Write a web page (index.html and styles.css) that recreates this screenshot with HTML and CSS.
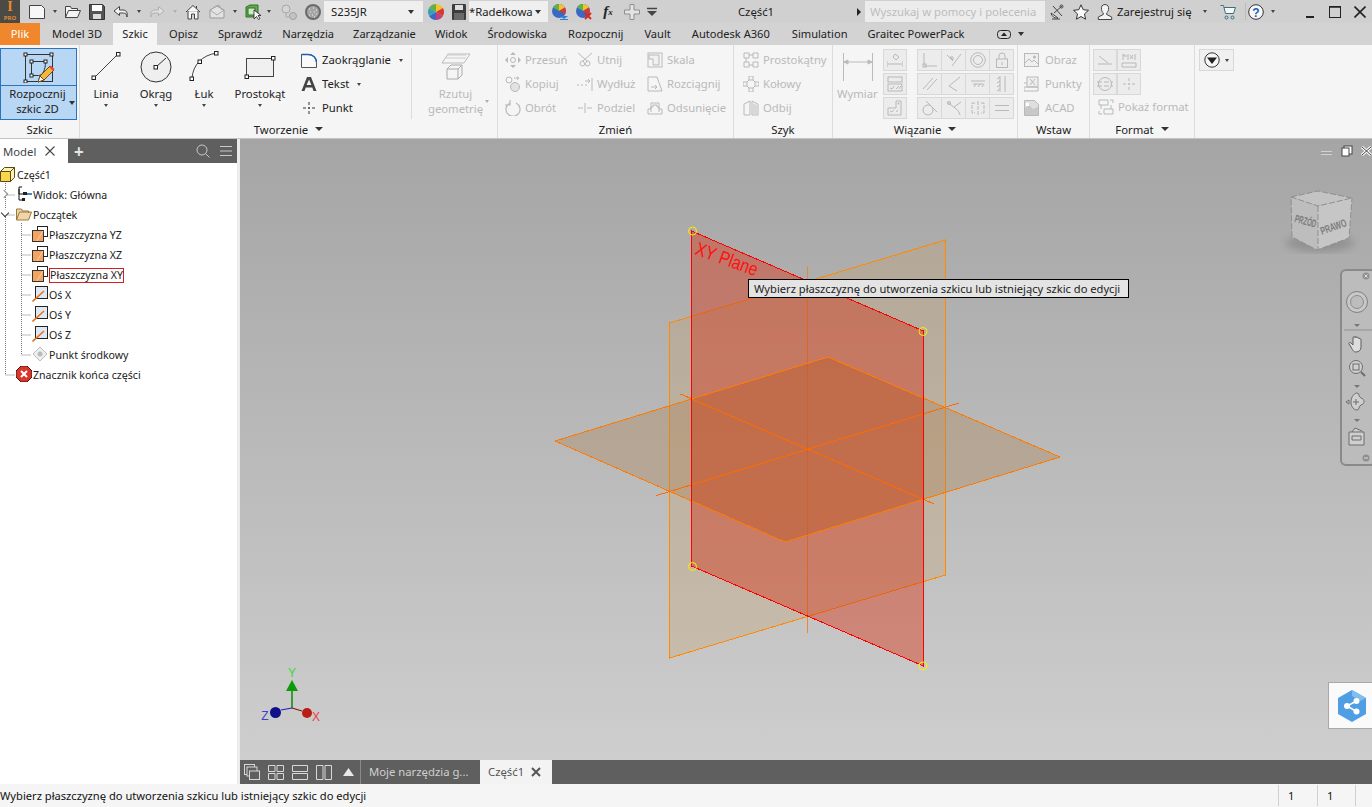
FILE: index.html
```html
<!DOCTYPE html>
<html lang="pl">
<head>
<meta charset="utf-8">
<title>Część1</title>
<link rel="stylesheet" href="styles.css">
</head>
<body>
<svg class="sprite" width="0" height="0">
  <defs>
    <symbol id="plane" viewBox="0 0 16 16"><rect x="5.500" y="0.500" width="10" height="10" fill="#fff" stroke="#222"/><rect x="0.500" y="4.500" width="11" height="11" fill="#f4a460" stroke="#333"/><path d="M5 15 11 5" stroke="#fbd0a0"/></symbol>
    <symbol id="axis" viewBox="0 0 16 16"><rect x="3.500" y="0.500" width="12" height="12" fill="#dfe9f6" stroke="#222"/><path d="M0.500 15.500 12 5" stroke="#e8731a" stroke-width="1.600"/></symbol>
    <symbol id="move" viewBox="0 0 16 16"><g fill="none" stroke="currentColor"><circle cx="8" cy="8" r="2.500"/></g><path d="M8 0l3 3H5zM8 16l3-3H5zM0 8l3-3v6zM16 8l-3-3v6z" fill="currentColor"/></symbol>
  </defs>
</svg>

<div class="app">
  <header class="titlebar">
    <div class="logo"><span class="logo-i">I</span><span class="logo-pro">PRO</span></div>
    <div class="tb-cell w24"><svg class="i16" viewBox="0 0 16 16"><path d="M.5 1.500h12l3 3v10H.5z" fill="#f7f7f7" stroke="#444"/></svg></div>
    <div class="tb-cell w12"><i class="caret"></i></div>
    <div class="tb-cell w24"><svg class="i16" viewBox="0 0 16 16"><path d="M.5 13.500v-11h5l1 2h6v2M.5 13.500l3-7h12l-3 7z" fill="#f4f4f4" stroke="#444"/></svg></div>
    <div class="tb-cell w24"><svg class="i16" viewBox="0 0 16 16"><path d="M.5.500h13l2 2v13H.5z" fill="#555" stroke="#333"/><rect x="3" y="1" width="10" height="6" fill="#fff"/><rect x="4" y="10" width="8" height="5" fill="#ddd"/></svg></div>
    <div class="tb-cell w24"><svg class="i16" viewBox="0 0 16 16"><path d="M6.500 2.500 1 7l5.500 4.500V9h4c2 0 3 1 3.500 4 1-4-.5-7-4-7h-3.500z" fill="#f4f4f4" stroke="#444" stroke-linejoin="round"/></svg></div>
    <div class="tb-cell w12"><i class="caret"></i></div>
    <div class="tb-cell w24"><svg class="i16" viewBox="0 0 16 16"><path d="M9.500 2.500 15 7l-5.500 4.500V9h-4c-2 0-3 1-3.500 4-1-4 .5-7 4-7h3.500z" fill="#e0e0e0" stroke="#b0b0b0" stroke-linejoin="round"/></svg></div>
    <div class="tb-cell w12"><i class="caret caret-off"></i></div>
    <div class="tb-cell w24"><svg class="i16" viewBox="0 0 16 16"><path d="M1 8 8 1.500 15 8M3 7v8h3.500v-5h3v5H13V7M11.500 2v2.500" fill="#f7f7f7" stroke="#444"/></svg></div>
    <div class="tb-cell w24"><svg class="i16" viewBox="0 0 16 16"><path d="M1 6l7-4 7 4v8H1z" fill="#e2e2e2" stroke="#999"/><path d="M1 6l7 5 7-5M5 3l5-2 3 5" fill="none" stroke="#aaa"/></svg></div>
    <div class="tb-cell w12"><i class="caret"></i></div>
    <div class="tb-cell w24"><svg class="i16" viewBox="0 0 16 16"><path d="M1 3l4-2h8v10l-2 2H1z" fill="#5fae4b" stroke="#2e6f2a"/><rect x="3" y="4" width="7" height="7" fill="#cfe9c6" stroke="#2e6f2a"/><path d="M9 6v9l2.500-2.500 2 3 1.500-1-2-3h3z" fill="#fff" stroke="#222" stroke-width=".8"/></svg></div>
    <div class="tb-cell w8"><i class="caret"></i></div>
    <div class="tb-cell w32"><svg class="i16" viewBox="0 0 16 16"><circle cx="5" cy="5" r="4" fill="#d4d4d4" stroke="#a8a8a8"/><ellipse cx="12" cy="12" rx="3.500" ry="3.500" fill="#c4c4c4" stroke="#a0a0a0"/><path d="M5 9v4h3" fill="none" stroke="#aaa"/></svg></div>
    <div class="tb-cell w16"><svg class="i16" viewBox="0 0 16 16"><circle cx="8" cy="8" r="8" fill="#6a6a6a"/><circle cx="8" cy="8" r="6" fill="#a5a5a5"/><path d="M4 5h1M8 4h1M11 6h1M5 8h1M9 8h1M4 11h1M7 11h1M11 10h1M9 13h1" stroke="#eee"/></svg></div>
    <div class="combo combo-mat">S235JR<i class="caret caret-dark"></i></div>
    <div class="tb-cell w26"><svg class="i16" viewBox="0 0 16 16"><path d="M8 8V0a8 8 0 0 1 6.900 4z" fill="#f2c32c"/><path d="M8 8l6.900-4a8 8 0 0 1 0 8z" fill="#d9382c"/><path d="M8 8l6.900 4A8 8 0 0 1 8 16z" fill="#c23f7d"/><path d="M8 8v8a8 8 0 0 1-6.900-4z" fill="#3a68c6"/><path d="M8 8l-6.900 4a8 8 0 0 1 0-8z" fill="#35a0b8"/><path d="M8 8 1.100 4A8 8 0 0 1 8 0z" fill="#63b043"/></svg></div>
    <div class="tb-cell w20"><svg class="i16" viewBox="0 0 16 16"><rect x="1" y="0" width="14" height="16" rx="1" fill="#3d3d3d"/><rect x="4" y="1" width="8" height="5" fill="#ddd"/><rect x="3" y="9" width="10" height="7" fill="#6a6a6a"/></svg></div>
    <div class="combo combo-app"><span class="combo-name">*Radełkowa</span><i class="caret caret-dark"></i></div>
    <div class="tb-cell w24"><svg class="i16" viewBox="0 0 16 16"><circle cx="7" cy="7" r="7" fill="#3a68c6"/><path d="M7 7V0a7 7 0 0 1 6 3.500z" fill="#f2c32c"/><path d="M7 7l6-3.500A7 7 0 0 1 13 10z" fill="#d9382c"/><path d="M7 7 1 3.500A7 7 0 0 1 7 0z" fill="#63b043"/><path d="M8 12h8l-4 3z" fill="#2f7fd6"/><path d="M8 15.500h8" stroke="#2f7fd6"/></svg></div>
    <div class="tb-cell w24"><svg class="i16" viewBox="0 0 16 16"><circle cx="7" cy="7" r="7" fill="#3a68c6"/><path d="M7 7V0a7 7 0 0 1 6 3.500z" fill="#f2c32c"/><path d="M7 7l6-3.500A7 7 0 0 1 13 10z" fill="#d9382c"/><path d="M7 7 1 3.500A7 7 0 0 1 7 0z" fill="#63b043"/><path d="M9 9l6 6M15 9l-6 6" stroke="#d8281c" stroke-width="2"/></svg></div>
    <div class="tb-cell w24 fx">f<sub>x</sub></div>
    <div class="tb-cell w24"><svg class="i16" viewBox="0 0 16 16"><path d="M6 .5h4v5.500h5.500v4H10v5.500H6V10H.5V6H6z" fill="#e4e4e4" stroke="#8f8f8f"/></svg></div>
    <div class="tb-cell w16"><svg class="i10" viewBox="0 0 10 10"><path d="M0 1.500h10" stroke="#444" stroke-width="1.500"/><path d="M0 4h10L5 9z" fill="#444"/></svg></div>
    <div class="doc-title">Część1</div>
    <div class="tb-cell w13"><i class="caret-right"></i></div>
    <div class="search">Wyszukaj w pomocy i polecenia</div>
    <div class="tb-cell w24"><svg class="i16" viewBox="0 0 16 16"><path d="M2 9a6 6 0 0 0 7 5zM4 2l9 10M13 2 5 9" fill="#eee" stroke="#444"/><path d="M3 15h8" stroke="#444"/><circle cx="12.500" cy="2.500" r="1.500" fill="none" stroke="#444"/></svg></div>
    <div class="tb-cell w24"><svg class="i16" viewBox="0 0 16 16"><path d="M8 .8 10.200 5.700l5.300.6-4 3.600 1.100 5.300L8 12.500l-4.600 2.700 1.100-5.300-4-3.600 5.300-.6z" fill="#fafafa" stroke="#333"/></svg></div>
    <div class="tb-cell w24"><svg class="i16" viewBox="0 0 16 16"><path d="M8 .5c-3 0-4 2.500-3.500 5 .3 1.500 1 3 1.800 3.500v1.500l-5 2.500v2.500h13.400V13l-5-2.500V9c.8-.5 1.500-2 1.800-3.500.5-2.500-.5-5-3.500-5z" fill="#f4f4f4" stroke="#444"/></svg></div>
    <div class="tb-text">Zarejestruj się</div>
    <div class="tb-cell w30"><i class="caret"></i></div>
    <div class="tb-cell w16"><svg class="i16" viewBox="0 0 16 16"><path d="M.5 1.500h3l2 8h8l2-6H4.200" fill="#f7f7f7" stroke="#3a6f80"/><circle cx="6.500" cy="13.500" r="1.500" fill="none" stroke="#3a6f80"/><circle cx="12.500" cy="13.500" r="1.500" fill="none" stroke="#3a6f80"/></svg></div>
    <div class="tb-sep"></div>
    <div class="tb-cell w18"><svg class="i16" viewBox="0 0 16 16"><circle cx="8" cy="8" r="7.300" fill="#f7f7f7" stroke="#333"/><text x="8" y="12.500" class="help-q">?</text></svg></div>
    <div class="tb-cell w16"><i class="caret"></i></div>
    <div class="win-ctl">
      <svg class="i12" viewBox="0 0 12 12"><path d="M2 11h8" stroke="#222" stroke-width="2"/></svg>
      <svg class="i12" viewBox="0 0 12 12"><rect x=".5" y=".5" width="11" height="11" fill="none" stroke="#222"/><path d="M0 1h12" stroke="#222" stroke-width="1.500"/></svg>
      <svg class="i12" viewBox="0 0 12 12"><path d="M.5.500l11 11M11.500.500l-11 11" stroke="#222" stroke-width="1.600"/></svg>
    </div>
  </header>

  <nav class="tabs">
    <div class="tab tab-file">Plik</div>
    <div class="tab tab-model">Model 3D</div>
    <div class="tab tab-on">Szkic</div>
    <div class="tab">Opisz</div>
    <div class="tab">Sprawdź</div>
    <div class="tab">Narzędzia</div>
    <div class="tab mln1">Zarządzanie</div>
    <div class="tab mln1">Widok</div>
    <div class="tab">Środowiska</div>
    <div class="tab ml1">Rozpocznij</div>
    <div class="tab ml1">Vault</div>
    <div class="tab ml1">Autodesk A360</div>
    <div class="tab ml2">Simulation</div>
    <div class="tab">Graitec PowerPack</div>
    <div class="tab-min"><svg class="min-ic" viewBox="0 0 14 9"><rect x=".5" y=".5" width="13" height="8" rx="3" fill="none" stroke="#222"/><path d="M7 2.500 10 6H4z" fill="#222"/></svg><i class="caret caret-dark"></i></div>
  </nav>

  <section class="ribbon">
    <div class="rgroup g-szkic">
      <div class="startsketch">
        <div class="ss-top">
          <svg class="i32" viewBox="0 0 32 32"><rect x="2.500" y="3.500" width="27" height="27" fill="none" stroke="#333"/><path d="M8.500 10.500v14h7c4 0 7-5 7-14z" fill="none" stroke="#333"/><g fill="#fff" stroke="#222"><rect x="1" y="2" width="3" height="3"/><rect x="27" y="2" width="3" height="3"/><rect x="1" y="29" width="3" height="3"/><rect x="7" y="9" width="3" height="3"/><rect x="21" y="9" width="3" height="3"/><rect x="7" y="23" width="3" height="3"/></g><path d="M15 31l2-6L27 15l4 4-10 10z" fill="#f6b63c" stroke="#6a4a10"/><path d="M15 31l2-6 4 4z" fill="#fff" stroke="#6a4a10"/><path d="M26 16l4 4 1.500-2-3.500-3.500z" fill="#e04a3a"/></svg>
        </div>
        <div class="ss-bot"><span>Rozpocznij<br>szkic 2D</span><i class="caret caret-dark ss-caret"></i></div>
      </div>
      <div class="rlabel">Szkic</div>
    </div>

    <div class="rgroup g-tworz">
      <div class="rbody">
        <div class="lbtn w48">
          <svg class="i30" viewBox="0 0 30 30"><path d="M3 27 27 3" stroke="#444"/><rect x="1" y="25" width="3.500" height="3.500" fill="#fff" stroke="#222"/><rect x="25.500" y="1.500" width="3.500" height="3.500" fill="#fff" stroke="#222"/></svg>
          <span>Linia</span><i class="caret"></i>
        </div>
        <div class="lbtn w52">
          <svg class="i32" viewBox="0 0 32 32"><circle cx="16" cy="16" r="15" fill="#efefef" stroke="#333"/><path d="M16 16 26 7" stroke="#333"/><rect x="14" y="14.500" width="3.500" height="3.500" fill="#fff" stroke="#222"/></svg>
          <span>Okrąg</span><i class="caret"></i>
        </div>
        <div class="lbtn w44">
          <svg class="i30" viewBox="0 0 30 30"><path d="M3 27C4 14 13 4 28 2" fill="none" stroke="#444"/><rect x="1" y="26" width="3.500" height="3.500" fill="#fff" stroke="#222"/><rect x="9" y="9" width="3.500" height="3.500" fill="#fff" stroke="#222"/><rect x="25.500" y="0.500" width="3.500" height="3.500" fill="#fff" stroke="#222"/></svg>
          <span>Łuk</span><i class="caret"></i>
        </div>
        <div class="lbtn w68">
          <svg class="i32w" viewBox="0 0 32 24"><rect x="2.500" y="3.500" width="27" height="18" fill="#f0f0f0" stroke="#444"/><rect x="1" y="20" width="3.500" height="3.500" fill="#fff" stroke="#222"/><rect x="27.500" y="1.500" width="3.500" height="3.500" fill="#fff" stroke="#222"/></svg>
          <span>Prostokąt</span><i class="caret"></i>
        </div>
        <div class="scol">
          <div class="srow gap5"><svg class="i16" viewBox="0 0 16 16"><path d="M.5 2.500h7a8 8 0 0 1 8 8v5H.5z" fill="#fafafa" stroke="#555"/><path d="M.5 2.500h7a8 8 0 0 1 8 8" fill="none" stroke="#1d5fb5" stroke-width="1.500"/></svg><span>Zaokrąglanie</span><i class="caret cm8"></i></div>
          <div class="srow gap5"><svg class="i16" viewBox="0 0 16 16"><path d="M0.500 15 6 1h4l5.500 14h-3l-1.200-3.500H4.700L3.500 15zM5.600 9h4.800L8 3.500z" fill="#444"/></svg><span>Tekst</span><i class="caret cm8"></i></div>
          <div class="srow gap5"><svg class="i16" viewBox="0 0 16 16"><path d="M8 2v3M8 7v2M8 11v3M2 8h3M7 8h2M11 8h3" stroke="#333"/></svg><span>Punkt</span></div>
        </div>
        <div class="lbtn off rzutuj">
          <svg class="i30" viewBox="0 0 30 30"><path d="M6 2h22l-6 9H0z" fill="none" stroke="#bbb" transform="translate(1 1)"/><path d="M4 7h21M7 4h18" stroke="#ccc"/><path d="M6 18h11v10H6zM6 18l4-4h11v10l-4 4M17 18l4-4" fill="none" stroke="#aaa"/></svg>
          <span class="two">Rzutuj<br>geometrię</span><i class="caret caret-off rz-caret"></i>
        </div>
      </div>
      <div class="rlabel">Tworzenie<i class="caret caret-big"></i></div>
    </div>

    <div class="rgroup g-zmien off">
      <div class="rbody zmien-grid">
        <div class="srow"><svg class="i16"><use href="#move"/></svg><span>Przesuń</span></div>
        <div class="srow"><svg class="i16" viewBox="0 0 16 16"><path d="M1 1l9 8M15 1 6 9M6 9a2.500 2.500 0 1 0 2 3zM10 9a2.500 2.500 0 1 1-2 3z" fill="none" stroke="currentColor"/></svg><span>Utnij</span></div>
        <div class="srow"><svg class="i16" viewBox="0 0 16 16"><path d="M2 3h10v10H6V7H2z" fill="#f0f0f0" stroke="currentColor"/><rect x="1" y="1" width="14" height="14" fill="none" stroke="currentColor"/></svg><span>Skala</span></div>
        <div class="srow"><svg class="i16" viewBox="0 0 16 16"><circle cx="4" cy="4" r="3" fill="none" stroke="currentColor"/><circle cx="10" cy="11" r="4.500" fill="#e2e2e2" stroke="currentColor"/><path d="M9 2h5M12 1l2 1-2 2" fill="none" stroke="currentColor"/></svg><span>Kopiuj</span></div>
        <div class="srow"><svg class="i16" viewBox="0 0 16 16"><path d="M0 9h2M4 9h2M8 9h2M15 2v13M8 5h5M11 3l2 2-2 2" fill="none" stroke="currentColor"/></svg><span>Wydłuż</span></div>
        <div class="srow"><svg class="i16" viewBox="0 0 16 16"><path d="M1 1h9l5 14H1zM4 11h6M8 9l2 2-2 2" fill="none" stroke="currentColor"/></svg><span>Rozciągnij</span></div>
        <div class="srow"><svg class="i16" viewBox="0 0 16 16"><path d="M5 3a7 7 0 1 0 6 0M5 0v5H0" fill="none" stroke="currentColor" stroke-width="1.200"/></svg><span>Obrót</span></div>
        <div class="srow"><svg class="i16" viewBox="0 0 16 16"><path d="M1 8h5M10 8h5M8 3v10" stroke="currentColor"/></svg><span>Podziel</span></div>
        <div class="srow"><svg class="i16" viewBox="0 0 16 16"><path d="M1 14V9h3V3h8v6h3v5zM4 12V7h2V5h4v2h2v5" fill="none" stroke="currentColor"/></svg><span>Odsunięcie</span></div>
      </div>
      <div class="rlabel">Zmień</div>
    </div>

    <div class="rgroup g-szyk off">
      <div class="rbody scol">
        <div class="srow"><svg class="i16" viewBox="0 0 16 16"><path d="M1 1h5v5H1zM10 1h5v5h-5zM1 10h5v5H1zM10 10h5v5h-5zM6 3h4M3 6v4M6 13h4" fill="none" stroke="currentColor"/></svg><span>Prostokątny</span></div>
        <div class="srow"><svg class="i16" viewBox="0 0 16 16"><path d="M6 0h4v4H6zM0 6h4v4H0zM12 6h4v4h-4zM6 12h4v4H6zM4 6l2-2M10 4l2 2M4 10l2 2M12 10l-2 2" fill="none" stroke="currentColor"/></svg><span>Kołowy</span></div>
        <div class="srow"><svg class="i16" viewBox="0 0 16 16"><path d="M7 1 1 4v11h6zM9 1l6 3v11H9z" fill="none" stroke="currentColor"/><path d="M10 3l4 2v9h-4z" fill="#d8d8d8"/></svg><span>Odbij</span></div>
      </div>
      <div class="rlabel">Szyk</div>
    </div>

    <div class="rgroup g-wiaz off">
      <div class="rbody wiaz-body">
        <div class="wymiar">
          <svg class="wym-ic" viewBox="0 0 32 30"><path d="M1.500 0v28M30.500 0v28M2 9h28M2 9l4-2v4zM30 9l-4-2v4z" fill="#bbb" stroke="#bbb"/></svg>
          <span>Wymiar</span>
        </div>
        <div class="wcol">
          <div class="tbox"><svg class="i16" viewBox="0 0 16 16"><path d="M0 9v6M16 9v6M1 12h14M8 2l4 3-3 3-3-3z" fill="none" stroke="currentColor"/></svg></div>
          <div class="tbox"><svg class="i16" viewBox="0 0 16 16"><rect x="1" y="1" width="14" height="5" fill="none" stroke="currentColor"/><rect x="1" y="8" width="14" height="7" fill="none" stroke="currentColor"/><path d="M3 12l2 1 2-3M9 13l3-3M12 13l2-3" fill="none" stroke="currentColor"/></svg></div>
          <div class="tbox"><svg class="i16" viewBox="0 0 16 16"><path d="M1 8h8V1h5v14H1z" fill="none" stroke="currentColor"/><path d="M3 11l2 1 2-2M9 12l2-2" stroke="currentColor" fill="none"/><circle cx="11.500" cy="3.500" r="1" fill="currentColor"/></svg></div>
        </div>
        <div class="wgrid">
          <div class="gcell"><svg class="i16" viewBox="0 0 16 16"><path d="M2 1v12M2 14h13" fill="none" stroke="currentColor"/><rect x="1" y="12" width="3" height="3" fill="none" stroke="currentColor"/></svg></div>
          <div class="gcell"><svg class="i16" viewBox="0 0 16 16"><path d="M1 3l6 6M15 2 6 14M4 5l3 3V5z" fill="none" stroke="currentColor"/></svg></div>
          <div class="gcell"><svg class="i16" viewBox="0 0 16 16"><circle cx="8" cy="8" r="7.300" fill="none" stroke="currentColor"/><circle cx="8" cy="8" r="4.500" fill="none" stroke="currentColor"/></svg></div>
          <div class="gcell"><svg class="i16" viewBox="0 0 16 16"><rect x="2.500" y="7" width="11" height="8.500" fill="none" stroke="currentColor"/><path d="M5 7V4a3 3 0 0 1 6 0v3M8 10v3" fill="none" stroke="currentColor"/></svg></div>
          <div class="gcell"><svg class="i16" viewBox="0 0 16 16"><path d="M1 13 11 2M5 14 15 3" stroke="currentColor"/></svg></div>
          <div class="gcell"><svg class="i16" viewBox="0 0 16 16"><path d="M14 1 3 10l8 5" fill="none" stroke="currentColor"/></svg></div>
          <div class="gcell"><svg class="i16" viewBox="0 0 16 16"><path d="M1 5h14M3 8h10M4 11l2-3M8 11l2-3M12 11l2-3" fill="none" stroke="currentColor"/></svg></div>
          <div class="gcell"><svg class="i16" viewBox="0 0 16 16"><path d="M6 0v16M11 0v16M3 3l3-2M3 7l3-2M3 11l3-2M3 15l3-2" fill="none" stroke="currentColor"/></svg></div>
          <div class="gcell"><svg class="i16" viewBox="0 0 16 16"><circle cx="6" cy="10" r="5" fill="none" stroke="currentColor"/><path d="M4 1l11 11" stroke="currentColor"/></svg></div>
          <div class="gcell"><svg class="i16" viewBox="0 0 16 16"><path d="M1 2l8 6c3 2 4 4 5 7M15 2 8 7" fill="none" stroke="currentColor"/><circle cx="3" cy="3" r="1.500" fill="none" stroke="currentColor"/></svg></div>
          <div class="gcell"><svg class="i16" viewBox="0 0 16 16"><path d="M8 1v14M5 3H2v10h3M11 3h3v10h-3" fill="none" stroke="currentColor" stroke-dasharray="4 1"/></svg></div>
          <div class="gcell"><svg class="i16" viewBox="0 0 16 16"><path d="M1 5.500h14M1 10.500h14" stroke="currentColor"/></svg></div>
        </div>
      </div>
      <div class="rlabel">Wiązanie<i class="caret caret-big"></i></div>
    </div>

    <div class="rgroup g-wstaw off">
      <div class="rbody scol">
        <div class="srow gap5"><svg class="i16" viewBox="0 0 16 16"><rect x=".5" y="1.500" width="14" height="13" fill="#efefef" stroke="currentColor"/><path d="M1 11l4-4 3 3 2-2 4 4" fill="none" stroke="currentColor"/><circle cx="10.500" cy="5" r="1.500" fill="currentColor"/></svg><span>Obraz</span></div>
        <div class="srow gap5"><svg class="i16" viewBox="0 0 16 16"><rect x="3" y="1" width="11" height="10" fill="#eee" stroke="currentColor"/><path d="M6 3l5 6M11 3 6 9M0 7h3M0 11h14v4H0z" fill="none" stroke="currentColor"/></svg><span>Punkty</span></div>
        <div class="srow gap5"><svg class="i16" viewBox="0 0 16 16"><path d="M.5.500h10l4 4v11H.5z" fill="#dfdfdf" stroke="currentColor"/><path d="M1 8l4-3 4 4 5-2v8H1z" fill="#c8c8c8"/><rect x="2" y="3" width="3" height="3" fill="#fff"/></svg><span>ACAD</span></div>
      </div>
      <div class="rlabel">Wstaw</div>
    </div>

    <div class="rgroup g-format off">
      <div class="rbody fmt-body">
        <div class="fgrid">
          <div class="fcell"><svg class="i16" viewBox="0 0 16 16"><path d="M2 4l9 7M1 12h14" fill="none" stroke="currentColor"/></svg></div>
          <div class="fcell"><svg class="i16" viewBox="0 0 16 16"><path d="M1 11h14v4H1zM2 2v6M7 2v6M3 2v2h3M9 3l3 4M12 3 9 7M14 2v6" fill="none" stroke="currentColor"/></svg></div>
          <div class="fcell"><svg class="i16" viewBox="0 0 16 16"><circle cx="8" cy="8" r="6.500" fill="none" stroke="currentColor"/><path d="M0 6h16M0 10h16" stroke="currentColor" stroke-dasharray="5 2"/></svg></div>
          <div class="fcell"><svg class="i16" viewBox="0 0 16 16"><path d="M8 2v3M8 7v2M8 11v3M2 8h3M7 8h2M11 8h3" stroke="currentColor"/></svg></div>
        </div>
        <div class="srow fmt-row"><svg class="i16" viewBox="0 0 16 16"><path d="M1 1h9v5H1zM6 10h9v5H6zM3 6v4M13 6v4M12 1h3v3M1 12v3h3" fill="none" stroke="currentColor"/></svg><span>Pokaż format</span></div>
      </div>
      <div class="rlabel">Format<i class="caret caret-big"></i></div>
    </div>

    <div class="g-extra">
      <div class="extra-btn"><svg class="i16" viewBox="0 0 16 16"><circle cx="8" cy="8" r="7.200" fill="#f7f7f7" stroke="#333"/><path d="M3 5.500h10L8 12z" fill="#222"/></svg><i class="caret"></i></div>
    </div>
  </section>

  <main class="workspace">
    <aside class="panel">
      <div class="panel-head">
        <div class="panel-tab">Model<svg class="i10" viewBox="0 0 10 10"><path d="M.5.500l9 9M9.500.500l-9 9" stroke="#444" stroke-width="1.100"/></svg></div>
        <div class="panel-bar">
          <span class="panel-plus">+</span>
          <svg class="i14 push" viewBox="0 0 14 14"><circle cx="6" cy="6" r="5" fill="none" stroke="#c8c8c8"/><path d="M9.500 9.500 13.500 13.500" stroke="#c8c8c8"/></svg>
          <svg class="i14" viewBox="0 0 14 14"><path d="M1 2.500h12M1 7h12M1 11.500h12" stroke="#c8c8c8"/></svg>
        </div>
      </div>
      <div class="tree">
        <svg class="tree-lines" viewBox="0 0 60 220"><path d="M5.500 20V212M5.500 52h10M5.500 32h10M5.500 212h10M21.500 60V192M21.500 72h10M21.500 92h10M21.500 112h10M21.500 132h10M21.500 152h10M21.500 172h10M21.500 192h10" fill="none" stroke="#777" stroke-dasharray="1 1"/></svg>
        <div class="trow"><svg class="i16" viewBox="0 0 16 16"><path d="M.5 5.500h10v10H.5z" fill="#f8d84a" stroke="#5a4a10"/><path d="M.5 5.500l4-4h10l-4 4zM10.500 5.500l4-4v10l-4 4z" fill="#fbf2b8" stroke="#5a4a10"/></svg>Część1</div>
        <div class="trow lv1"><i class="twist closed"></i><svg class="i16" viewBox="0 0 16 16"><path d="M6 1H3v7M3 3v11h3M3 8h4" fill="none" stroke="#111"/><rect x="7" y="6" width="4" height="3" fill="#222"/><rect x="11" y="7" width="5" height="2" fill="#4a84c8"/><rect x="6" y="12" width="3" height="3" fill="#222"/></svg>Widok: Główna</div>
        <div class="trow lv1"><i class="twist open"></i><svg class="i16" viewBox="0 0 16 16"><path d="M.5 14V3h5l1 2h6v2M.5 14l3-8h12l-3 8z" fill="#f0d5a8" stroke="#9b7a3f"/></svg>Początek</div>
        <div class="trow lv2"><svg class="i16"><use href="#plane"/></svg>Płaszczyzna YZ</div>
        <div class="trow lv2"><svg class="i16"><use href="#plane"/></svg>Płaszczyzna XZ</div>
        <div class="trow lv2"><svg class="i16"><use href="#plane"/></svg><span class="picked">Płaszczyzna XY</span></div>
        <div class="trow lv2"><svg class="i16"><use href="#axis"/></svg>Oś X</div>
        <div class="trow lv2"><svg class="i16"><use href="#axis"/></svg>Oś Y</div>
        <div class="trow lv2"><svg class="i16"><use href="#axis"/></svg>Oś Z</div>
        <div class="trow lv2"><svg class="i16" viewBox="0 0 16 16"><path d="M8 1 15 8 8 15 1 8z" fill="#efefef" stroke="#bbb"/><circle cx="8" cy="8" r="2.500" fill="#bbb"/></svg>Punkt środkowy</div>
        <div class="trow lv1"><svg class="i16" viewBox="0 0 16 16"><path d="M5 0h6l5 5v6l-5 5H5l-5-5V5z" fill="#d8382c" stroke="#4a1010"/><path d="M5 5l6 6M11 5l-6 6" stroke="#fff" stroke-width="2"/></svg>Znacznik końca części</div>
      </div>
    </aside>

    <div class="right">
      <div class="viewport">
        <svg class="scene" viewBox="240 139 1132 621">
          <defs><filter id="soft"><feGaussianBlur stdDeviation="4"/></filter></defs>
          <polygon class="crisp" points="669.500,323 945.500,240 945.500,575 669.500,658" fill="rgb(200,160,110)" fill-opacity=".3" stroke="#ff8a00"/>
          <line class="crisp" x1="807.500" y1="266" x2="807.500" y2="633" stroke="#e88a30"/>
          <polygon points="692,231 923,331 923,666 692,566" fill="rgb(213,55,24)" fill-opacity=".45"/>
          <polygon points="555,441 828,357 1060,457 785,542" fill="rgb(175,130,80)" fill-opacity=".35"/>
          <polygon points="692,399 828,357 923,398 923,499 785,542 692,501" fill="rgb(200,80,40)" fill-opacity=".33"/>
          <polygon class="crisp" points="555,441 828,357 1060,457 785,542" fill="none" stroke="#ff7a00"/>
          <line class="crisp" x1="680.500" y1="394" x2="934" y2="504" stroke="#ff6a00"/>
          <line class="crisp" x1="656.500" y1="495.500" x2="959" y2="403" stroke="#ff6a00"/>
          <polygon class="crisp" points="691.500,231 923.500,331 923.500,666 691.500,566" fill="none" stroke="#ff0000"/>
          <g fill="none" stroke="#ffee00"><circle cx="692.500" cy="231" r="4"/><circle cx="923" cy="331.500" r="4"/><circle cx="692.500" cy="566.500" r="4"/><circle cx="923" cy="666" r="4"/></g>
          <text class="xy" transform="translate(694 254) rotate(20)" textLength="65" lengthAdjust="spacingAndGlyphs">XY Plane</text>

          <g class="triad">
            <path d="M292 708V690" stroke="#0a8a0a" stroke-width="1.500"/>
            <path d="M292 680 298 691H286z" fill="#0a9a0a"/>
            <path d="M292 708 281 710" stroke="#2222bb" stroke-width="1.200" fill="none"/>
            <ellipse cx="275.500" cy="712.500" rx="5.500" ry="5.500" fill="#10108a"/>
            <path d="M292 708 302 711" stroke="#7a1a10" stroke-width="1.200"/>
            <circle cx="307" cy="713" r="5" fill="#b81c14"/>
            <text x="292" y="677" class="t-y">Y</text>
            <text x="265" y="720" class="t-z">Z</text>
            <text x="316" y="721" class="t-x">X</text>
          </g>

          <g class="cube">
            <ellipse cx="1320" cy="243" rx="34" ry="9" fill="#7a7a7a" fill-opacity=".55" filter="url(#soft)"/>
            <polygon points="1291,197 1318,191 1352,198 1318,206" fill="#c3c3c3"/>
            <polygon points="1291,197 1318,206 1317,250 1292,237" fill="#bdbdbd"/>
            <polygon points="1318,206 1352,198 1349,238 1317,250" fill="#c6c6c6"/>
            <path d="M1291 197 1318 191 1352 198 1318 206 1291 197 1292 237 1317 250 1349 238 1352 198M1318 206V250" fill="none" stroke="#8f8f8f" stroke-dasharray="6 2"/>
            <text class="cube-t" transform="translate(1294 222) rotate(15)" textLength="22" lengthAdjust="spacingAndGlyphs">PRZÓD</text>
            <text class="cube-t" transform="translate(1322 235) rotate(-20)" textLength="27" lengthAdjust="spacingAndGlyphs">PRAWO</text>
          </g>
        </svg>

        <div class="vp-ctl">
          <svg class="i12" viewBox="0 0 12 12"><path d="M0 8h11" stroke="#fff" stroke-width="3"/><path d="M0 8h11" stroke="#444"/></svg>
          <svg class="i12" viewBox="0 0 12 12"><rect x="3" y="1" width="8" height="8" fill="#fff" stroke="#444"/><rect x="1" y="3" width="7" height="8" fill="#fff" stroke="#444"/></svg>
          <svg class="i12" viewBox="0 0 12 12"><path d="M1 2l9 8M10 2 1 10" stroke="#fff" stroke-width="3"/><path d="M1 2l9 8M10 2 1 10" stroke="#444"/></svg>
        </div>

        <div class="tooltip">Wybierz płaszczyznę do utworzenia szkicu lub istniejący szkic do edycji</div>

        <div class="navbar">
          <svg class="nav-svg" viewBox="0 0 32 197">
            <circle cx="26" cy="7" r="3.500" fill="#8f8f8f"/><path d="M24.500 5.500l3 3M27.500 5.500l-3 3" stroke="#ddd"/>
            <circle cx="17" cy="33" r="10.500" fill="#c8c8c8" stroke="#808080"/><circle cx="17" cy="33" r="6.500" fill="#bdbdbd" stroke="#8c8c8c"/>
            <path d="M14 55h6l-3 3z" fill="#777"/>
            <path d="M4 61h28" stroke="#8f8f8f"/>
            <path d="M11 78l-2-3c-1-1 1-2 2-1l2 2V69c0-2 2-2 2 0 0-2 2-2 2 0 0-1 2-1 2 1 0-1 2-1 2 1v7c0 3-2 5-5 5-2 0-3-1-5-5z" fill="#ddd" stroke="#5d5d5d"/>
            <circle cx="16" cy="98" r="6.500" fill="#cfcfcf" stroke="#6d6d6d"/><rect x="13" y="95" width="6" height="6" fill="none" stroke="#6d6d6d"/><path d="M21 103l4 4" stroke="#6d6d6d" stroke-width="2"/>
            <path d="M14 116h6l-3 3z" fill="#777"/>
            <path d="M11 133c0-6 4-9 6-9 3 0 1 4 4 5 4 1 4 6 0 7-3 1-1 5-4 5s-6-3-6-8zM6 133l3-2v4zM13 133h6M16 130v6" fill="#cfcfcf" stroke="#6d6d6d"/>
            <path d="M14 150h6l-3 3z" fill="#777"/>
            <path d="M9 163h15v13H9zM12 163l3-4 7 3M12 167h9v4h-9z" fill="#cfcfcf" stroke="#6d6d6d"/>
            <circle cx="26" cy="189" r="3.500" fill="#8f8f8f"/><path d="M24 189h4" stroke="#ddd"/>
          </svg>
        </div>

        <div class="share">
          <svg class="share-ic" viewBox="0 0 28 32"><path d="M14 0 28 8v16l-14 8-14-8V8z" fill="#4f9ee3"/><path d="M14 0 28 8 22 11l-8-5z" fill="#83bdf0"/><g fill="#fff"><circle cx="18.500" cy="11" r="3"/><circle cx="18.500" cy="21.500" r="3"/><circle cx="9" cy="16" r="3"/></g><path d="M18.500 11 9 16 18.500 21.500" fill="none" stroke="#fff" stroke-width="1.500"/></svg>
        </div>
      </div>

      <div class="docbar">
        <svg class="bar-ic" viewBox="0 0 16 16"><rect x=".5" y=".5" width="10" height="10" fill="none" stroke="#d8d8d8"/><rect x="3" y="3" width="10" height="9" fill="#5f5f5f" stroke="#d8d8d8"/><rect x="5.500" y="7" width="10" height="8.500" fill="#5f5f5f" stroke="#d8d8d8"/></svg>
        <svg class="bar-ic" viewBox="0 0 16 16"><path d="M.5 1.500h6.500v6H.5zM9 1.500h6.500v6H9zM.5 9.500h6.500v6H.5zM9 9.500h6.500v6H9z" fill="none" stroke="#d8d8d8"/></svg>
        <svg class="bar-ic" viewBox="0 0 16 16"><path d="M.5 1.500h15v6H.5zM.5 9.500h15v6H.5z" fill="none" stroke="#d8d8d8"/></svg>
        <svg class="bar-ic" viewBox="0 0 16 16"><path d="M.5 1.500h6.500v14H.5zM9 1.500h6.500v14H9z" fill="none" stroke="#d8d8d8"/></svg>
        <svg class="bar-up" viewBox="0 0 11 8"><path d="M5.500 0 11 8H0z" fill="#e8e8e8"/></svg>
        <div class="bar-sep"></div>
        <div class="doc-tab">Moje narzędzia g...</div>
        <div class="doc-tab doc-on">Część1<svg class="i10" viewBox="0 0 10 10"><path d="M1 1l8 8M9 1 1 9" stroke="#555" stroke-width="2"/></svg></div>
      </div>
    </div>
  </main>

  <footer class="status">
    <div class="status-msg">Wybierz płaszczyznę do utworzenia szkicu lub istniejący szkic do edycji</div>
    <div class="status-cell c39">1</div>
    <div class="status-cell c38">1</div>
    <div class="status-end"></div>
  </footer>
</div>
</body>
</html>
```
FILE: styles.css
```css
* { box-sizing: border-box; }
html, body { margin: 0; padding: 0; }
body { font-family: "Noto Sans", "Open Sans", sans-serif; font-size: 11.300px; color: #222; background: #fff; overflow: hidden; }
svg { display: block; flex-shrink: 0; }
.sprite { position: absolute; }
i { display: block; font-style: normal; }
.app { width: 1372px; height: 807px; display: flex; flex-direction: column; overflow: hidden; }

.i10 { width: 10px; height: 10px; }
.i12 { width: 12px; height: 12px; }
.i14 { width: 14px; height: 14px; }
.i16 { width: 16px; height: 16px; }
.i30 { width: 30px; height: 30px; }
.i32 { width: 32px; height: 32px; }
.i32w { width: 32px; height: 24px; }

.caret { width: 0; height: 0; border-left: 2.500px solid transparent; border-right: 2.500px solid transparent; border-top: 3px solid #444; }
.caret-off { border-top-color: #b0b0b0; }
.caret-dark { border-top-color: #333; border-left-width: 3.500px; border-right-width: 3.500px; border-top-width: 4px; }
.caret-big { border-left-width: 4px; border-right-width: 4px; border-top-width: 4px; border-top-color: #333; margin-left: 7px; }
.caret-right { width: 0; height: 0; border-top: 4px solid transparent; border-bottom: 4px solid transparent; border-left: 4px solid #222; }
.cm8 { margin-left: 3px; }

/* title bar */
.titlebar { height: 23px; background: #d0d0d0; display: flex; align-items: center; flex-shrink: 0; }
.logo { width: 20px; height: 23px; background: #4c4a45; margin-right: 5px; display: flex; flex-direction: column; align-items: center; line-height: 1; }
.logo-i { color: #e58b2e; font-family: "Liberation Serif", serif; font-weight: 700; font-size: 14px; height: 15px; }
.logo-pro { color: #d98a3a; font-size: 6px; font-weight: 700; }
.tb-cell { height: 23px; display: flex; align-items: center; justify-content: center; flex-shrink: 0; }
.w8 { width: 8px; } .w12 { width: 12px; } .w13 { width: 13px; } .w16 { width: 16px; } .w18 { width: 18px; }
.w20 { width: 20px; } .w24 { width: 24px; } .w26 { width: 26px; } .w30 { width: 30px; } .w32 { width: 32px; }
.combo { height: 21px; background: #efefef; display: flex; align-items: center; flex-shrink: 0; justify-content: space-between; }
.combo-mat { width: 99px; margin-left: 3px; padding-left: 7px; padding-right: 9px; }
.combo-app { width: 79px; padding-right: 7px; }
.combo-name { white-space: nowrap; }
.fx { font-family: "Liberation Serif", serif; font-style: italic; font-size: 15px; color: #222; font-weight: 700; }
.fx sub { font-size: 9px; }
.doc-title { width: 192px; text-align: center; }
.search { width: 180px; height: 21px; line-height: 21px; background: #ececec; color: #bdbdbd; padding-left: 5px; white-space: nowrap; flex-shrink: 0; }
.tb-text { width: 73px; white-space: nowrap; }
.tb-sep { width: 1px; height: 17px; background: #bbb; margin: 0 0 0 9px; }
.tb-sep + .tb-cell { margin-left: 1px; }
.help-q { font: 700 12px "Liberation Sans", sans-serif; fill: #1d5fb5; text-anchor: middle; }
.win-ctl { display: flex; gap: 13px; margin-left: 23px; align-items: center; }

/* tabs */
.tabs { height: 22px; background: #d3d3d3; display: flex; flex-shrink: 0; font-size: 11.100px; }
.tab { height: 22px; line-height: 21px; padding: 0 10px; white-space: nowrap; }
.tab-file { width: 40px; padding: 0; text-align: center; background: #f0872c; color: #fff; }
.tab-model { margin-left: 2px; margin-right: 1px; }
.tab-on { background: #f5f5f5; width: 44px; padding: 0; text-align: center; margin: 0 2px 0 0; }
.mln1 { margin-left: -1px; }
.ml1 { margin-left: 1px; }
.ml2 { margin-left: 2px; }
.tab-min { display: flex; align-items: center; margin-left: 23px; gap: 7px; }
.min-ic { width: 14px; height: 9px; }

/* ribbon */
.ribbon { height: 94px; background: #f5f5f5; border-bottom: 1px solid #c4c4c4; display: flex; flex-shrink: 0; }
.rgroup { display: flex; flex-direction: column; border-right: 1px solid #dcdcdc; flex-shrink: 0; }
.off { color: #b9b9b9; }
.rlabel { height: 18px; line-height: 17px; display: flex; align-items: center; justify-content: center; color: #222; flex-shrink: 0; }
.rbody { flex: 1; display: flex; min-height: 0; }
.g-szkic { width: 80px; }
.g-tworz { width: 418px; }
.g-zmien { width: 236px; }
.g-szyk { width: 99px; }
.g-wiaz { width: 185px; }
.g-wstaw { width: 72px; }
.g-format { width: 105px; }
.g-extra { padding: 4px 0 0 4px; }
.startsketch { margin-top: 3px; width: 77px; height: 72px; background: #b7d7f4; border: 1px solid #2d74bd; display: flex; flex-direction: column; flex-shrink: 0; }
.ss-top { height: 37px; border-bottom: 1px solid #2d74bd; display: flex; align-items: center; justify-content: center; padding-left: 1px; }
.ss-bot { flex: 1; position: relative; text-align: center; line-height: 15px; padding-right: 2px; }
.ss-caret { position: absolute; right: 1px; top: 15px; }
.g-szkic .rlabel { height: 19px; }

.lbtn { display: flex; flex-direction: column; align-items: center; padding-top: 6px; line-height: 18px; flex-shrink: 0; }
.lbtn .i30 { margin-bottom: 4px; }
.lbtn .i32 { margin-bottom: 2px; }
.lbtn .i32w { margin: 4px 0 6px; }
.lbtn > span { white-space: nowrap; }
.lbtn > .caret { margin-top: 1px; }
.w44 { width: 44px; } .w48 { width: 48px; } .w52 { width: 52px; } .w68 { width: 68px; }
.g-tworz .rbody { padding-left: 2px; }
.scol { display: flex; flex-direction: column; padding-top: 3px; }
.srow { height: 24px; display: flex; align-items: center; gap: 4px; white-space: nowrap; flex-shrink: 0; }
.srow > span { margin-bottom: 2px; }
.gap5 { gap: 5px; }
.g-tworz .scol { width: 118px; padding: 0 0 0 7px; border-right: 1px solid #dcdcdc; margin: 3px 0 1px; }
.rzutuj { width: 84px; position: relative; padding-left: 3px; }
.rzutuj .two { line-height: 15px; text-align: center; margin-top: 1px; }
.rz-caret { position: absolute; right: 7px; top: 54px; }
.zmien-grid { display: grid; grid-template-columns: 72px 70px 1fr; grid-auto-rows: 24px; padding: 3px 0 0 7px; }
.g-szyk .scol { padding-left: 9px; }
.wiaz-body { padding: 4px 0 0 4px; }
.wymiar { width: 45px; display: flex; flex-direction: column; line-height: 16px; }
.wym-ic { width: 32px; height: 30px; margin: 4px 0 3px 5px; }
.wcol { width: 24px; display: flex; flex-direction: column; gap: 2px; margin-left: 1px; }
.tbox { width: 24px; height: 22px; background: #ececec; border: 1px solid #d8d8d8; display: flex; align-items: center; justify-content: center; color: #b8b8b8; }
.wgrid { margin-left: 11px; width: 96px; display: grid; grid-template-columns: repeat(4, 24px); grid-auto-rows: 22px; row-gap: 2px; }
.gcell { background: #ececec; border: 1px solid #d8d8d8; display: flex; align-items: center; justify-content: center; color: #b8b8b8; margin-left: -1px; }
.g-wstaw .scol { padding-left: 6px; }
.fmt-body { flex-direction: column; padding: 4px 0 0 3px; }
.fgrid { display: grid; grid-template-columns: repeat(2, 24px); grid-auto-rows: 22px; row-gap: 2px; }
.fcell { background: #ececec; border: 1px solid #d8d8d8; display: flex; align-items: center; justify-content: center; color: #b8b8b8; }
.fmt-row { margin: 0 0 0 5px; }
.extra-btn { width: 35px; height: 22px; border: 1px solid #d8d8d8; background: #f0f0f0; display: flex; align-items: center; justify-content: center; gap: 5px; }

/* workspace */
.workspace { flex: 1; display: flex; min-height: 0; }
.panel { width: 240px; background: #fff; border-right: 3px solid #ececec; flex-shrink: 0; display: flex; flex-direction: column; }
.panel-head { height: 24px; display: flex; flex-shrink: 0; }
.panel-tab { width: 68px; display: flex; align-items: center; justify-content: space-between; padding: 0 13px 0 3px; color: #444; }
.panel-bar { flex: 1; background: #5f5f5f; display: flex; align-items: center; padding: 0 4px 0 6px; gap: 9px; }
.panel-plus { color: #e6e6e6; font-size: 17px; font-weight: 700; line-height: 1; }
.push { margin-left: auto; }
.tree { position: relative; padding-top: 2px; font-size: 10.600px; }
.tree-lines { position: absolute; left: 0; top: 0; width: 60px; height: 220px; }
.trow { height: 20px; display: flex; align-items: center; gap: 1px; white-space: nowrap; position: relative; }
.trow > svg { margin-bottom: 2px; }
.lv1 { padding-left: 16px; }
.lv2 { padding-left: 32px; }
.twist { position: absolute; left: 1px; top: 6px; width: 6px; height: 6px; border-right: 1.500px solid #888; border-bottom: 1.500px solid #888; background: #fff; }
.twist.closed { transform: rotate(-45deg); }
.twist.open { transform: rotate(45deg); border-color: #333; top: 5px; left: 2px; }
.picked { border: 1px solid #d31f1f; line-height: 13px; height: 15px; width: 75px; }

.right { flex: 1; display: flex; flex-direction: column; min-width: 0; }
.viewport { height: 621px; position: relative; overflow: hidden; background: linear-gradient(#a5a5a5, #cecece); flex-shrink: 0; }
.scene { position: absolute; left: 0; top: 0; width: 1132px; height: 621px; }
.crisp { shape-rendering: crispEdges; }
.xy { fill: #ff1010; font: 19px "Liberation Sans", sans-serif; }
.triad text { font: 12px "Liberation Sans", sans-serif; text-anchor: middle; }
.t-y { fill: #38d838; }
.t-z { fill: #4040d0; }
.t-x { fill: #ee4040; }
.cube-t { font: 700 11px "Liberation Sans", sans-serif; fill: #7c7c7c; }
.vp-ctl { position: absolute; right: -1px; top: 6px; display: flex; gap: 8px; }
.tooltip { position: absolute; left: 508px; top: 140px; height: 19px; width: 381px; line-height: 17px; padding-left: 5px; background: #e4e4e4; border: 1px solid #000; white-space: nowrap; font-size: 11.150px; }
.navbar { position: absolute; left: 1100px; top: 130px; width: 36px; height: 197px; border: 2px solid #8a8a8a; border-radius: 6px; background: #bcbcbc; overflow: hidden; }
.nav-svg { width: 32px; height: 197px; margin: -2px 0 0 -2px; }
.share { position: absolute; left: 1088px; top: 543px; width: 48px; height: 47px; background: #fafafa; border: 1px solid #a8a8a8; display: flex; align-items: center; padding-left: 9px; }
.share-ic { width: 28px; height: 32px; }

.docbar { flex: 1; background: #5f5f5f; display: flex; align-items: center; padding-left: 4px; }
.bar-ic { width: 16px; height: 16px; margin-right: 8px; }
.bar-up { width: 11px; height: 8px; margin-left: 3px; }
.bar-sep { width: 1px; height: 24px; background: #8a8a8a; margin-left: 6px; }
.doc-tab { height: 24px; line-height: 24px; width: 119px; padding-left: 8px; color: #cfcfcf; white-space: nowrap; }
.doc-on { width: 72px; background: #f3f3f3; color: #555; padding-left: 8px; display: flex; align-items: center; justify-content: space-between; padding-right: 11px; }

.status { height: 23px; background: #f5f5f5; display: flex; align-items: center; flex-shrink: 0; color: #111; font-size: 11.150px; }
.status-msg { flex: 1; white-space: nowrap; min-width: 0; }
.status-cell { height: 21px; line-height: 21px; border-left: 1px solid #d0d0d0; padding-left: 9px; }
.c39 { width: 39px; } .c38 { width: 38px; }
.status-end { width: 17px; height: 21px; border-left: 1px solid #d0d0d0; }
```
